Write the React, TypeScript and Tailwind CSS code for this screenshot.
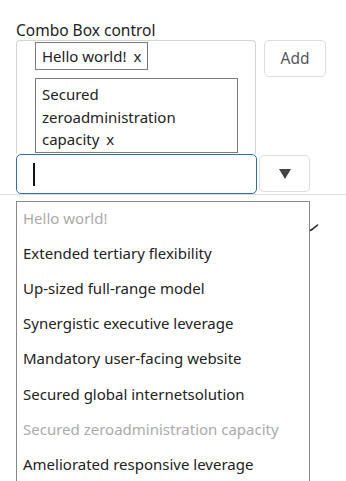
import React from "react";

const items: { label: string; disabled?: boolean }[] = [
  { label: "Hello world!", disabled: true },
  { label: "Extended tertiary flexibility" },
  { label: "Up-sized full-range model" },
  { label: "Synergistic executive leverage" },
  { label: "Mandatory user-facing website" },
  { label: "Secured global internetsolution" },
  { label: "Secured zeroadministration capacity", disabled: true },
  { label: "Ameliorated responsive leverage" },
];

export default function App() {
  return (
    <div
      className="w-[346px] h-[481px] overflow-hidden bg-white text-[#222]"
      style={{ fontFamily: '"Noto Sans", "Open Sans", sans-serif' }}
    >
      <div className="px-4 pt-[20px]">
        <div className="h-[20px] text-[15.5px] leading-[20px]">Combo Box control</div>
        <div className="flex items-start">
          <div className="w-[240px] h-[114px] border border-b-0 border-[#d4d4d4] rounded-t-[4px] pl-[18px] pt-[1px] flex flex-col items-start gap-[8px] overflow-hidden">
            <div className="border border-[#7a7a7a] h-[28px] px-[6px] text-[15px] leading-[26px]">
              Hello world! <span className="ml-[3px]">x</span>
            </div>
            <div className="border border-[#7a7a7a] w-[203px] h-[75px] px-[6px] pt-[4px] text-[15px] leading-[22.5px]">
              Secured zeroadministration <span className="whitespace-nowrap">capacity <span className="ml-[3px]">x</span></span>
            </div>
          </div>
          <button className="ml-[8px] w-[62px] h-[37px] border border-[#dcdcdc] rounded-[5px] text-[15.5px] text-[#555] bg-white">
            Add
          </button>
        </div>
        <div className="flex items-start">
          <div className="w-[241px] h-[40px] border border-[#2f6db5] rounded-[5px] flex items-center pl-[16px]">
            <div className="w-[2px] h-[23px] bg-[#111]" />
          </div>
          <button className="ml-[2px] mt-[1px] w-[51px] h-[37px] border border-[#dcdcdc] rounded-[5px] flex items-center justify-center bg-white">
            <svg width="12" height="10" viewBox="0 0 12 10">
              <polygon points="0,0 12,0 6,10" fill="#444" />
            </svg>
          </button>
        </div>
      </div>
      <div className="h-px bg-[#dcdcdc]" />
      <div className="relative px-4 pt-[6px]">
        <svg
          className="absolute left-[309px] top-[29px]"
          width="10"
          height="8"
          viewBox="0 0 10 8"
        >
          <path d="M1 6.5 L3 5.5 L8.5 1" stroke="#222" strokeWidth="1.6" fill="none" strokeLinecap="round" />
        </svg>
        <div className="relative w-[294px] border border-[#888] bg-white">
          {items.map((it) => (
            <div
              key={it.label}
              className={`h-[35.15px] flex items-center px-[6px] pb-[3px] text-[15px] whitespace-nowrap ${
                it.disabled ? "text-[#aaa]" : "text-[#222]"
              }`}
            >
              {it.label}
            </div>
          ))}
        </div>
      </div>
    </div>
  );
}
